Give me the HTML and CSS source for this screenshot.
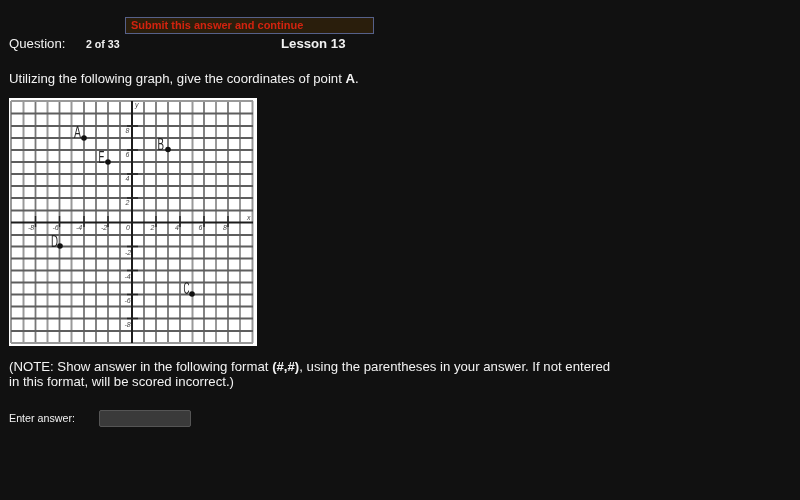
FILE: index.html
```html
<!DOCTYPE html>
<html>
<head>
    <title>Lesson 13 Quiz</title>
    <link rel="stylesheet" href="styles.css">
</head>
<body>
    <div class="submit-row">
        <button class="submit-btn" type="button">Submit this answer and continue</button>
    </div>

    <div class="header-row">
        <span class="question-label">Question:</span>
        <span class="question-count">2 of 33</span>
        <span class="lesson-title">Lesson 13</span>
    </div>

    <p class="prompt">Utilizing the following graph, give the coordinates of point <b>A</b>.</p>

    <!-- Graph uses page coordinates in its viewBox -->
    <svg class="graph" width="248" height="248" viewBox="9 98 248 248">
        <rect x="9" y="98" width="248" height="248" fill="#fff"/>
        <path class="grid-light" d="M23.5 101V343M47.5 101V343M71.5 101V343M192.5 101V343M216 101V343M240 101V343M11 101V343M252.5 101V343"/>
        <path class="grid-mid" d="M35.5 101V343M59.5 101V343M84 101V343M96 101V343M108 101V343M120 101V343M144 101V343M156 101V343M168 101V343M180 101V343M204 101V343M228 101V343"/>
        <path class="grid-dark" d="M11 113.5H253M11 126H253M11 138H253M11 150H253M11 162H253M11 174H253M11 186H253M11 198H253M11 210.5H253M11 235H253M11 246.5H253M11 258.5H253M11 270.5H253M11 282.5H253M11 294.5H253M11 306.5H253M11 318.5H253M11 331H253"/>
        <path class="grid-light" d="M11 101H253M11 343H253"/>
        <path class="axis" d="M132 101V343M11 222.5H253"/>
        <path class="tick" d="M127 126H138M127 150H138M127 174H138M127 198H138M127 246.5H138M127 270.5H138M127 294.5H138M127 318.5H138"/>
        <path class="tick" d="M35.5 216V227M59.5 216V227M84 216V227M108 216V227M156 216V227M180 216V227M204 216V227M228 216V227"/>

        <g class="num">
            <text x="28" y="230">-8</text>
            <text x="52.500" y="230">-6</text>
            <text x="76" y="230">-4</text>
            <text x="101" y="230">-2</text>
            <text x="126" y="230">0</text>
            <text x="150.500" y="230">2</text>
            <text x="175" y="230">4</text>
            <text x="198.500" y="230">6</text>
            <text x="223" y="230">8</text>
            <text x="125.500" y="133">8</text>
            <text x="125.500" y="157">6</text>
            <text x="125.500" y="181">4</text>
            <text x="125.500" y="205">2</text>
            <text x="125" y="255">-2</text>
            <text x="124.500" y="279">-4</text>
            <text x="124.500" y="303">-6</text>
            <text x="124.500" y="327">-8</text>
            <text x="135" y="107">y</text>
            <text x="247" y="220">x</text>
        </g>

        <g class="point-label">
            <text x="74" y="138" textLength="7" lengthAdjust="spacingAndGlyphs">A</text>
            <text x="98.500" y="163" textLength="6" lengthAdjust="spacingAndGlyphs">E</text>
            <text x="157.500" y="150" textLength="6.500" lengthAdjust="spacingAndGlyphs">B</text>
            <text x="51" y="246.500" textLength="7" lengthAdjust="spacingAndGlyphs">D</text>
            <text x="183.500" y="294" textLength="6" lengthAdjust="spacingAndGlyphs">C</text>
        </g>

        <circle cx="84" cy="138" r="2.800"/>
        <circle cx="108" cy="162" r="2.800"/>
        <circle cx="168" cy="149.500" r="2.800"/>
        <circle cx="60" cy="246" r="2.800"/>
        <circle cx="192" cy="294" r="2.800"/>
    </svg>

    <p class="note">(NOTE: Show answer in the following format <b>(#,#)</b>, using the parentheses in your answer. If not entered in this format, will be scored incorrect.)</p>

    <div class="answer-row">
        <label class="answer-label" for="answer">Enter answer:</label>
        <input class="answer-input" id="answer" type="text">
    </div>
</body>
</html>
```

FILE: styles.css
```css
body {
    margin: 0;
    padding: 17px 0 0 9px;
    background-color: #111111;
    color: #f2f2f2;
    font-family: "Liberation Sans", Arial, sans-serif;
    font-size: 13.2px;
}
.submit-row {
    padding-left: 116px;
}
.submit-btn {
    display: block;
    width: 249px;
    height: 17px;
    padding: 0 0 2px 5px;
    background-color: #2a1e0c;
    border: 1px solid #56618a;
    color: #d3230f;
    font-family: inherit;
    font-size: 11px;
    font-weight: bold;
    text-align: left;
    filter: blur(0.3px);
}
.header-row {
    display: flex;
    align-items: baseline;
    height: 18px;
    margin-top: 2px;
    filter: blur(0.3px);
}
.question-label {
    width: 77px;
}
.question-count {
    width: 195px;
    font-size: 10.6px;
    font-weight: bold;
}
.lesson-title {
    font-size: 13.2px;
    font-weight: bold;
}
.prompt {
    margin: 16px 0 0;
    line-height: 18px;
    filter: blur(0.3px);
}
.graph {
    display: block;
    margin-top: 10px;
    filter: blur(0.5px);
}
.grid-light {
    fill: none;
    stroke: #999999;
    stroke-width: 2;
}
.grid-mid {
    fill: none;
    stroke: #777777;
    stroke-width: 1.800;
}
.grid-dark {
    fill: none;
    stroke: #5e5e5e;
    stroke-width: 1.800;
}
.axis {
    fill: none;
    stroke: #1c1c1c;
    stroke-width: 2;
}
.tick {
    fill: none;
    stroke: #222222;
    stroke-width: 1.400;
}
.num text {
    fill: #444444;
    font-family: "Liberation Sans", sans-serif;
    font-size: 7px;
    font-style: italic;
}
.point-label text {
    fill: #222222;
    font-family: "Liberation Sans", sans-serif;
    font-size: 16px;
}
.graph circle {
    fill: #111111;
}
.note {
    width: 605px;
    margin: 13px 0 0;
    line-height: 15px;
    filter: blur(0.3px);
}
.answer-row {
    display: flex;
    align-items: center;
    margin-top: 21px;
}
.answer-label {
    width: 90px;
    padding-bottom: 2px;
    font-size: 10.7px;
    filter: blur(0.3px);
}
.answer-input {
    box-sizing: border-box;
    width: 92px;
    height: 17px;
    background-color: #3a3a3a;
    border: 1px solid #555555;
    border-radius: 2px;
}
```
